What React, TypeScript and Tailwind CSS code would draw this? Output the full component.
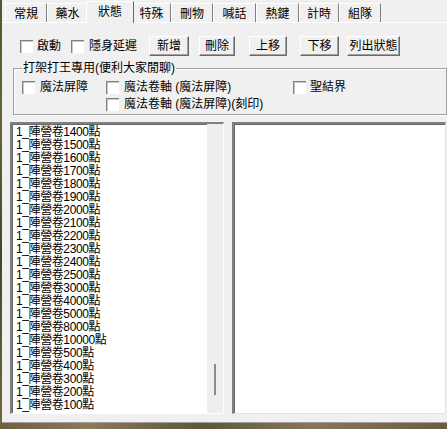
import React from "react";

const FONT = '"Liberation Sans", "Noto Sans CJK TC", sans-serif';

const tabs: { label: string; w: number }[] = [
  { label: "常規", w: 42 },
  { label: "藥水", w: 41 },
  { label: "狀態", w: 44 },
  { label: "特殊", w: 39 },
  { label: "刪物", w: 42 },
  { label: "喊話", w: 43 },
  { label: "熱鍵", w: 43 },
  { label: "計時", w: 40 },
  { label: "組隊", w: 42 },
];

const items = [
  "1400", "1500", "1600", "1700", "1800", "1900", "2000", "2100", "2200", "2300", "2400",
  "2500", "3000", "4000", "5000", "8000", "10000", "500", "400", "300", "200", "100",
];

function Check() {
  return (
    <span className="inline-block w-[13px] h-[13px] shrink-0 bg-white border-t border-l border-[#808080] border-r-white border-b-white shadow-[inset_1px_1px_0_#c8c8c8]" />
  );
}

function Btn({ label, w, ml }: { label: string; w: string; ml: string }) {
  return (
    <div
      className={`${w} ${ml} h-[20px] flex items-center justify-center bg-[#f0f0f0] border-t border-l border-white border-r border-b border-r-[#696969] border-b-[#696969] shadow-[inset_-1px_-1px_0_#a0a0a0] text-[12px] leading-none text-black`}
    >
      {label}
    </div>
  );
}

export default function App() {
  return (
    <div className="w-[447px] h-[429px] flex flex-col overflow-hidden" style={{ fontFamily: FONT }}>
      <div className="flex flex-1 min-h-0">
        {/* desktop peeking at the left edge */}
        <div className="w-[2px] bg-[linear-gradient(180deg,#4d5a2c,#6b6238_30%,#3f4a25_60%,#74663e)]" />
        <div className="flex-1 flex flex-col bg-[#f0f0f0] border-b border-[#a0a0a0]">
          {/* tab strip */}
          <div className="h-[23px] flex items-end pl-[3px] border-b border-white shrink-0">
            {tabs.map((t, i) => {
              const sel = t.label === "狀態";
              return (
                <div
                  key={i}
                  className={
                    sel
                      ? "relative z-10 h-[22px] -mb-[1px] -mx-[2px] px-0 flex items-start justify-center pt-[3px] bg-[#f0f0f0] border-t border-l border-white border-r border-r-[#696969] text-[12px] leading-[14px] text-black"
                      : "h-[19px] flex items-start justify-center pt-[3px] bg-[#f0f0f0] border-t border-l border-white border-r border-r-[#808080] text-[12px] leading-[14px] text-black"
                  }
                  style={{ width: sel ? t.w + 4 : t.w }}
                >
                  {t.label}
                </div>
              );
            })}
          </div>

          {/* toggles and action buttons */}
          <div className="mt-[13px] h-[20px] flex items-center text-[12px] text-black">
            <div className="ml-[18px] flex items-center gap-[4px]">
              <Check />
              <span>啟動</span>
            </div>
            <div className="ml-[10px] flex items-center gap-[5px]">
              <Check />
              <span>隱身延遲</span>
            </div>
            <Btn label="新增" w="w-[40px]" ml="ml-[12px]" />
            <Btn label="刪除" w="w-[36px]" ml="ml-[10px]" />
            <Btn label="上移" w="w-[38px]" ml="ml-[14px]" />
            <Btn label="下移" w="w-[39px]" ml="ml-[13px]" />
            <Btn label="列出狀態" w="w-[53px]" ml="ml-[8px]" />
          </div>

          {/* boss fight group */}
          <fieldset className="mt-[5px] ml-[11px] h-[54px] border border-[#a0a0a0] shadow-[inset_1px_1px_0_#ffffff,1px_1px_0_#ffffff] px-[8px] text-[12px] text-black">
            <legend className="ml-0 px-[1px] leading-[14px]">打架打王專用(便利大家閒聊)</legend>
            <div className="flex items-center h-[16px] mt-[4px]">
              <div className="w-[84px] flex items-center gap-[5px]">
                <Check />
                <span>魔法屏障</span>
              </div>
              <div className="w-[187px] flex items-center gap-[5px]">
                <Check />
                <span>魔法卷軸 (魔法屏障)</span>
              </div>
              <div className="flex items-center gap-[4px]">
                <Check />
                <span>聖結界</span>
              </div>
            </div>
            <div className="flex items-center h-[16px] mt-[1px] pl-[84px]">
              <div className="flex items-center gap-[5px]">
                <Check />
                <span>魔法卷軸 (魔法屏障)(刻印)</span>
              </div>
            </div>
          </fieldset>

          {/* status lists */}
          <div className="mt-[7px] flex pl-[8px] h-[292px]">
            <div className="w-[214px] h-full flex bg-white border-t-2 border-l-2 border-[#808080] border-r border-b border-r-white border-b-white shadow-[inset_1px_1px_0_#696969]">
              <div className="flex-1 pl-[4px] pt-[2px] text-[12px] leading-[13px] tracking-[-0.4px] text-black overflow-hidden">
                {items.map((n) => (
                  <div key={n} className="h-[13px] whitespace-nowrap">
                    1_陣營卷{n}點
                  </div>
                ))}
              </div>
              <div className="w-[16px] h-full bg-[#eeeeee] flex flex-col items-center">
                <div className="mt-[240px] w-[2px] h-[31px] bg-[#8a8a8a]" />
              </div>
            </div>
            <div className="ml-[8px] w-[214px] h-full bg-white border-t-2 border-l-2 border-[#808080] border-r border-b border-r-[#e3e3e3] border-b-[#e3e3e3] shadow-[inset_1px_1px_0_#696969]" />
          </div>
        </div>
      </div>
      {/* desktop peeking along the bottom edge */}
      <div className="h-[6px] shrink-0 bg-[linear-gradient(90deg,#6e5f42,#8a7a58_20%,#5f553b_45%,#87775a_70%,#6a5c40)]" />
    </div>
  );
}
